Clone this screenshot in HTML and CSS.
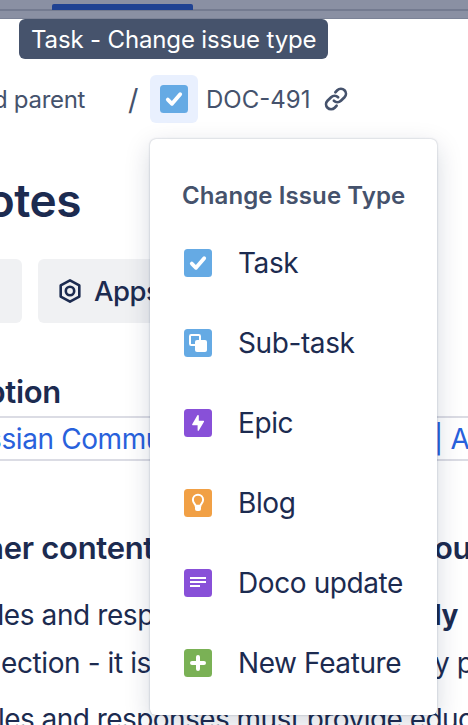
FILE: index.html
```html
<!DOCTYPE html>
<html lang="en">
<head>
    <meta charset="UTF-8">
    <meta name="viewport" content="width=device-width, initial-scale=1.0">
    <title>DOC-491</title>
    <link rel="stylesheet" href="styles.css">
</head>
<body>

<div class="topbar">
    <div class="active-tab"></div>
</div>

<div class="breadcrumbs">
    <span class="parent">d parent</span>
    <span class="slash">/</span>
    <button class="type-button">
        <svg class="icon" viewBox="0 0 28 28"><rect width="28" height="28" rx="3.5" fill="#65aae4"/><path d="M7.8 14.6l4.2 4.2 8.2-9.6" fill="none" stroke="#fff" stroke-width="3.8" stroke-linecap="round" stroke-linejoin="round"/></svg>
    </button>
    <span class="issue-key">DOC-491</span>
    <svg class="link-icon" viewBox="0 0 24 24"><g fill="none" stroke="#45526c" stroke-width="2.7" stroke-linecap="round"><path d="M11.4 5.2l1.9-1.9a5 5 0 0 1 7.2 0 5 5 0 0 1 0 7l-3.6 3.5a5 5 0 0 1-7 0"/><path d="M12.6 18.8l-1.9 1.9a5 5 0 0 1-7.2 0 5 5 0 0 1 0-7l3.6-3.5a5 5 0 0 1 7 0"/></g></svg>
</div>

<h1 class="title"><span>notes</span></h1>

<div class="actions">
    <button class="action action-first"></button>
    <button class="action">
        <svg class="apps-icon" viewBox="0 0 24 26"><path d="M12 2.4l9.3 5v11.2l-9.3 5-9.3-5V7.4z" fill="none" stroke="#1c2b50" stroke-width="2.6" stroke-linejoin="round"/><circle cx="12" cy="13" r="4.2" fill="none" stroke="#1c2b50" stroke-width="2.6"/></svg>
        Apps
    </button>
</div>

<h2 class="section"><span>Description</span></h2>

<div class="link-row">
    <a class="clip"><span>Atlassian Commu</span></a>
    <a class="rest">| A</a>
</div>

<h2 class="subhead">
    <span class="clip"><span>her content</span></span>
    <span class="rest">ou</span>
</h2>

<p class="line">
    <span class="clip"><span>les and resp</span></span>
    <b class="rest">ly</b>
</p>
<p class="line middle">
    <span class="clip"><span>ection - it is</span></span>
    <span class="rest">y p</span>
</p>
<p class="line last">les and responses must provide educ</p>

<div class="tooltip">Task - Change issue type</div>

<div class="menu">
    <h3>Change Issue Type</h3>
    <div class="item">
        <svg class="icon" viewBox="0 0 28 28"><rect width="28" height="28" rx="3.5" fill="#65aae4"/><path d="M7.8 14.6l4.2 4.2 8.2-9.6" fill="none" stroke="#fff" stroke-width="3.8" stroke-linecap="round" stroke-linejoin="round"/></svg>
        <span>Task</span>
    </div>
    <div class="item">
        <svg class="icon" viewBox="0 0 28 28"><rect width="28" height="28" rx="3.5" fill="#65aae4"/><rect x="6" y="6" width="10" height="10" rx="1.2" fill="none" stroke="#fff" stroke-width="2"/><rect x="11" y="11" width="12" height="12" rx="2" fill="#fff"/></svg>
        <span>Sub-task</span>
    </div>
    <div class="item">
        <svg class="icon" viewBox="0 0 28 28"><rect width="28" height="28" rx="3.5" fill="#8850d8"/><path d="M13.4 6.2L8.2 15.2q-.4 1 .6 1h4.8v5q.3 1.4 1.2.4l5.2-8.8q.4-1-.6-1h-4.6V6.6q-.5-1.2-1.4-.4z" fill="#fff"/></svg>
        <span>Epic</span>
    </div>
    <div class="item">
        <svg class="icon" viewBox="0 0 28 28"><rect width="28" height="28" rx="3.5" fill="#f1a045"/><path d="M11.6 16.8c-.2-1.6-2.7-2.8-2.7-6a5.1 5.1 0 0 1 10.2 0c0 3.2-2.5 4.4-2.7 6z" fill="none" stroke="#fff" stroke-width="2"/><path d="M11 16h6v4q0 2-2 2h-2q-2 0-2-2z" fill="#fff"/></svg>
        <span>Blog</span>
    </div>
    <div class="item">
        <svg class="icon" viewBox="0 0 28 28"><rect width="28" height="28" rx="3.5" fill="#8850d8"/><path d="M6 9h16M6 13h16M6 17h10" stroke="#fff" stroke-width="2"/></svg>
        <span>Doco update</span>
    </div>
    <div class="item">
        <svg class="icon" viewBox="0 0 28 28"><rect width="28" height="28" rx="3.5" fill="#7ab155"/><path d="M14 8v12M8 14h12" stroke="#fff" stroke-width="4" stroke-linecap="round"/></svg>
        <span>New Feature</span>
    </div>
</div>

</body>
</html>
```

FILE: styles.css
```css
* {
    box-sizing: border-box;
}
body {
    margin: 0;
    height: 725px;
    position: relative;
    overflow: hidden;
    background: white;
    color: #1c2b50;
    font-family: Inter, "Liberation Sans", sans-serif;
    font-size: 28px;
}
h1, h2, h3, p {
    margin: 0;
}
button {
    border: none;
    padding: 0;
    color: inherit;
    font-family: inherit;
}
.topbar {
    height: 19px;
    padding: 4px 0 0 52px;
    background: linear-gradient(#8a90a3 9px, #747b90 9px, #747b90 11px, #8a90a3 11px, #8a90a3 18px, #7c8397 18px);
}
.active-tab {
    width: 141px;
    height: 6px;
    border-radius: 2px 2px 0 0;
    background: #1f4292;
}
.breadcrumbs {
    display: flex;
    align-items: center;
    height: 48px;
    margin-top: 56px;
    color: #45526c;
    font-size: 24px;
    white-space: nowrap;
}
.parent {
    width: 135px;
    margin-left: -7px;
    letter-spacing: -0.3px;
}
.slash {
    width: 22px;
    font-size: 29px;
}
.type-button {
    display: flex;
    align-items: center;
    justify-content: center;
    width: 48px;
    height: 48px;
    border-radius: 6px;
    background: #e9f0fe;
}
.icon {
    width: 28px;
    height: 28px;
    flex: none;
}
.issue-key {
    width: 117px;
    margin-left: 8px;
}
.link-icon {
    width: 26px;
    height: 24px;
}
.title {
    display: flex;
    justify-content: flex-end;
    width: 81px;
    margin-top: 47px;
    font-size: 46px;
    font-weight: 600;
    line-height: 60px;
    letter-spacing: -0.5px;
}
.actions {
    display: flex;
    gap: 16px;
    margin-top: 29px;
}
.action {
    display: flex;
    align-items: center;
    width: 180px;
    height: 64px;
    padding-left: 20px;
    border-radius: 6px;
    background: #f0f1f3;
    font-size: 27.5px;
    font-weight: 500;
    letter-spacing: -0.5px;
}
.action-first {
    width: 40px;
    margin-left: -18px;
}
.apps-icon {
    width: 24px;
    height: 26px;
    margin-right: 12px;
}
.section {
    display: flex;
    justify-content: flex-end;
    width: 61px;
    margin-top: 49px;
    font-size: 31px;
    font-weight: 600;
    line-height: 40px;
    letter-spacing: -0.3px;
}
.link-row {
    display: flex;
    height: 45px;
    margin-top: 4px;
    border-top: 2px solid #dbdce4;
    border-bottom: 2px solid #dbdce4;
    line-height: 43px;
    letter-spacing: -0.4px;
    color: #2861dc;
    white-space: nowrap;
}
.clip {
    display: flex;
    justify-content: flex-end;
    flex: none;
    width: 154px;
    margin-right: 280px;
    white-space: nowrap;
}
.link-row .clip {
    width: 162px;
    margin-right: 272px;
}
.subhead {
    display: flex;
    margin-top: 66px;
    font-size: 31px;
    font-weight: 600;
    line-height: 42px;
    letter-spacing: -0.3px;
}
.line {
    display: flex;
    margin-top: 22px;
    line-height: 48px;
    letter-spacing: -0.4px;
    white-space: nowrap;
}
.line + .line {
    margin-top: 0;
}
.middle .clip {
    width: 151px;
    margin-right: 283px;
}
.line + .last {
    margin: 8px 0 0 -2px;
    letter-spacing: -0.55px;
}
.tooltip {
    position: absolute;
    top: 19px;
    left: 19px;
    width: 309px;
    height: 40px;
    padding-left: 12px;
    border-radius: 6px;
    background: #46536c;
    color: white;
    font-size: 24px;
    line-height: 41px;
    letter-spacing: -0.15px;
    white-space: nowrap;
}
.menu {
    position: absolute;
    top: 139px;
    left: 150px;
    width: 287px;
    height: 576px;
    padding: 37px 0 0 32px;
    border-radius: 6px;
    background: white;
    box-shadow: 0 8px 26px rgba(9, 30, 66, 0.17), 0 0 2px rgba(9, 30, 66, 0.31);
}
.menu h3 {
    height: 47px;
    color: #45526c;
    font-size: 24px;
    font-weight: 600;
    line-height: 40px;
    letter-spacing: 0.1px;
    white-space: nowrap;
}
.item {
    display: flex;
    align-items: center;
    gap: 26px;
    height: 80px;
    padding-left: 2px;
    letter-spacing: -0.4px;
    white-space: nowrap;
}
```
